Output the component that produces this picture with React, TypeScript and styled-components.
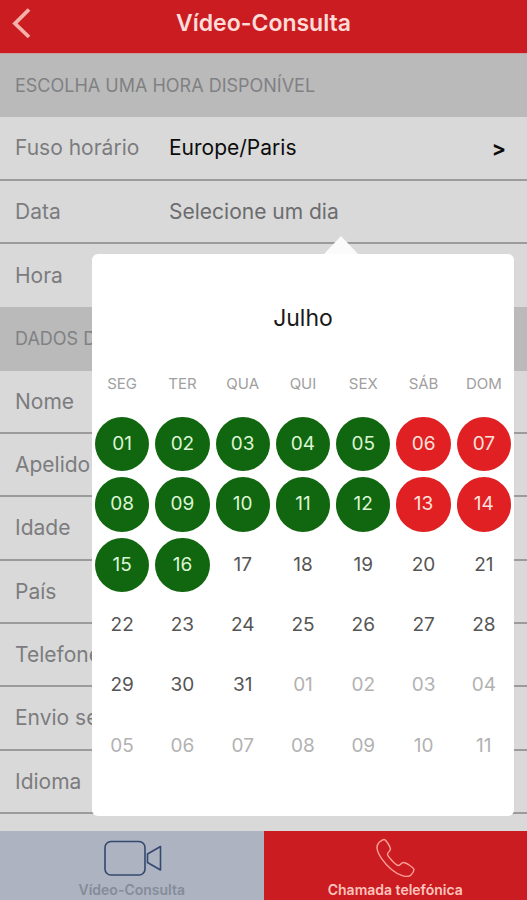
import React from "react";
import styled, { createGlobalStyle, css } from "styled-components";

const GlobalStyle = createGlobalStyle`
  * { box-sizing: border-box; }
  body {
    margin: 0;
    background: #d9d9d9;
    font-family: Inter, "Liberation Sans", sans-serif;
    color: #77777a;
  }
  button, input { font: inherit; color: inherit; border: 0; background: none; padding: 0; }
  button { cursor: pointer; }
`;

const Screen = styled.div`
  display: flex;
  flex-direction: column;
  min-height: 100vh;
`;

const Header = styled.header`
  display: grid;
  grid-template-columns: 44px 1fr 44px;
  align-items: center;
  height: 54px;
  padding-bottom: 8px;
  border-bottom: 1px solid #c9a0a2;
  background: #cb1c22;
  color: #ffdcd8;
`;

const BackButton = styled.button`
  display: flex;
  padding-left: 11px;
  color: #f3b3ab;
`;

const Title = styled.h1`
  margin: 0;
  font-size: 23px;
  line-height: 28px;
  font-weight: 600;
  text-align: center;
`;

const Form = styled.form`
  flex: 1;
  display: flex;
  flex-direction: column;
  padding-bottom: 17px;
`;

const band = css`
  flex: 1 0 63px;
  padding: 0 15px;
  align-items: center;
`;

const SectionTitle = styled.h2`
  ${band}
  display: flex;
  margin: 0;
  background: #bababa;
  color: #808183;
  font-size: 18px;
  font-weight: 400;
`;

const Row = styled.div<{ $last?: boolean }>`
  ${band}
  position: relative;
  display: grid;
  grid-template-columns: 154px 1fr;
  border-bottom: ${(p) => (p.$last ? "0" : "2px solid #9b9b9b")};
  font-size: 21px;
`;

const Label = styled.label`
  color: #7c7c7f;
`;

const ValueButton = styled.button<{ $strong?: boolean }>`
  display: flex;
  justify-content: space-between;
  align-items: center;
  text-align: left;
  color: ${(p) => (p.$strong ? "#0c0c0c" : "#6c6c6e")};
`;

const Chevron = styled.span`
  padding: 2px 6px 0 0;
  font-weight: 700;
`;

const TextInput = styled.input`
  width: 100%;
  min-width: 0;
`;

const Popover = styled.div`
  position: absolute;
  z-index: 2;
  top: calc(100% + 12px);
  left: 92px;
  right: 13px;
  padding: 48px 0 40px;
  border-radius: 6px;
  background: #fff;

  &::before {
    content: "";
    position: absolute;
    bottom: 100%;
    left: 232px;
    border: solid transparent;
    border-width: 0 17px 18px;
    border-bottom-color: #fbfbfb;
  }
`;

const Calendar = styled.table`
  width: 100%;
  table-layout: fixed;
  border-collapse: collapse;
  color: #555;
`;

const Month = styled.caption`
  padding-bottom: 38px;
  font-size: 23px;
  line-height: 32px;
  color: #1a1a1a;
`;

const Weekday = styled.th`
  padding: 0 0 18px;
  font-size: 15px;
  line-height: 24px;
  font-weight: 400;
  color: #a0a0a0;
`;

const DayCell = styled.td`
  padding: 3px;
`;

type Tone = "free" | "full" | "plain" | "next";

const tones = {
  free: css`background: #11670f; color: #dcf5d4;`,
  full: css`background: #e02023; color: #ffe0dc;`,
  plain: css`color: #555;`,
  next: css`color: #b2b2b2;`,
};

const Day = styled.button<{ $tone: Tone }>`
  display: flex;
  align-items: center;
  justify-content: center;
  width: 100%;
  aspect-ratio: 1;
  border-radius: 50%;
  font-size: 19px;
  line-height: 24px;
  ${(p) => tones[p.$tone]}
`;

const TabBar = styled.nav`
  display: grid;
  grid-template-columns: 1fr 1fr;
`;

const Tab = styled.button<{ $active?: boolean }>`
  display: flex;
  flex-direction: column;
  align-items: center;
  height: 69px;
  padding-top: 6px;
  gap: 4px;
  overflow: hidden;
  font-size: 14px;
  line-height: 18px;
  font-weight: 600;
  background: ${(p) => (p.$active ? "#cb1c22" : "#adb3c1")};
  color: ${(p) => (p.$active ? "#ffc4bd" : "#858c99")};
`;

const fields = [
  ["nome", "Nome"],
  ["apelido", "Apelido"],
  ["idade", "Idade"],
  ["pais", "País"],
  ["telefone", "Telefone"],
  ["envio", "Envio seguro"],
  ["idioma", "Idioma"],
];

const weekdays = ["SEG", "TER", "QUA", "QUI", "SEX", "SÁB", "DOM"];

const weeks = Array.from({ length: 6 }, (_, w) =>
  Array.from({ length: 7 }, (_, d) => {
    const index = w * 7 + d + 1;
    const tone: Tone =
      index > 31 ? "next" : index > 16 ? "plain" : d > 4 ? "full" : "free";
    return { text: String(index > 31 ? index - 31 : index).padStart(2, "0"), tone };
  })
);

function DatePicker() {
  return (
    <Popover role="dialog" aria-label="Selecione um dia">
      <Calendar>
        <Month>Julho</Month>
        <thead>
          <tr>
            {weekdays.map((d) => (
              <Weekday key={d} scope="col">{d}</Weekday>
            ))}
          </tr>
        </thead>
        <tbody>
          {weeks.map((week, i) => (
            <tr key={i}>
              {week.map((day) => (
                <DayCell key={day.text + day.tone}>
                  <Day type="button" $tone={day.tone}>{day.text}</Day>
                </DayCell>
              ))}
            </tr>
          ))}
        </tbody>
      </Calendar>
    </Popover>
  );
}

function VideoIcon() {
  return (
    <svg width="60" height="40" viewBox="0 0 60 40" fill="none" stroke="#34496f" strokeWidth="1.6" strokeLinejoin="round" aria-hidden="true">
      <rect x="3" y="4.5" width="40" height="33.5" rx="6" />
      <path d="M45.5 17 58.5 9.500V33L45.500 25.500Z" />
    </svg>
  );
}

function PhoneIcon() {
  return (
    <svg width="40" height="40" viewBox="0 0 40 40" fill="none" stroke="#ff9f98" strokeWidth="1.4" strokeLinejoin="round" aria-hidden="true">
      <path d="M4 5.500C6 4 7.500 2.500 9 2.500C11 2.500 15.500 10 15.500 12C15.500 14 12.500 15.500 12.500 17C12.500 19.500 20 27.500 23 28.500C25 29 26 25.500 28.500 25.500C31 25.500 38.500 30.500 39 32.500C39 34.500 38 36 36 38C33 41 24 39 16.500 32.500C9 26 2.500 17 2 11C2 8.500 2.500 7 4 5.500Z" />
    </svg>
  );
}

export default function App() {
  return (
    <Screen>
      <GlobalStyle />
      <Header>
        <BackButton aria-label="Voltar">
          <svg width="21" height="32" viewBox="0 0 21 32" fill="none" stroke="currentColor" strokeWidth="3.8" aria-hidden="true">
            <path d="M18 2.500 4 16.500 18 30" />
          </svg>
        </BackButton>
        <Title>Vídeo-Consulta</Title>
      </Header>
      <Form>
        <SectionTitle>ESCOLHA UMA HORA DISPONÍVEL</SectionTitle>
        <Row>
          <Label htmlFor="fuso">Fuso horário</Label>
          <ValueButton id="fuso" type="button" $strong>
            Europe/Paris <Chevron aria-hidden="true">&gt;</Chevron>
          </ValueButton>
        </Row>
        <Row>
          <Label htmlFor="data">Data</Label>
          <ValueButton id="data" type="button">Selecione um dia</ValueButton>
          <DatePicker />
        </Row>
        <Row $last>
          <Label htmlFor="hora">Hora</Label>
          <TextInput id="hora" />
        </Row>
        <SectionTitle>DADOS DO PACIENTE</SectionTitle>
        {fields.map(([id, label]) => (
          <Row key={id}>
            <Label htmlFor={id}>{label}</Label>
            <TextInput id={id} />
          </Row>
        ))}
      </Form>
      <TabBar>
        <Tab type="button">
          <VideoIcon />
          Vídeo-Consulta
        </Tab>
        <Tab type="button" $active>
          <PhoneIcon />
          Chamada telefónica
        </Tab>
      </TabBar>
    </Screen>
  );
}
